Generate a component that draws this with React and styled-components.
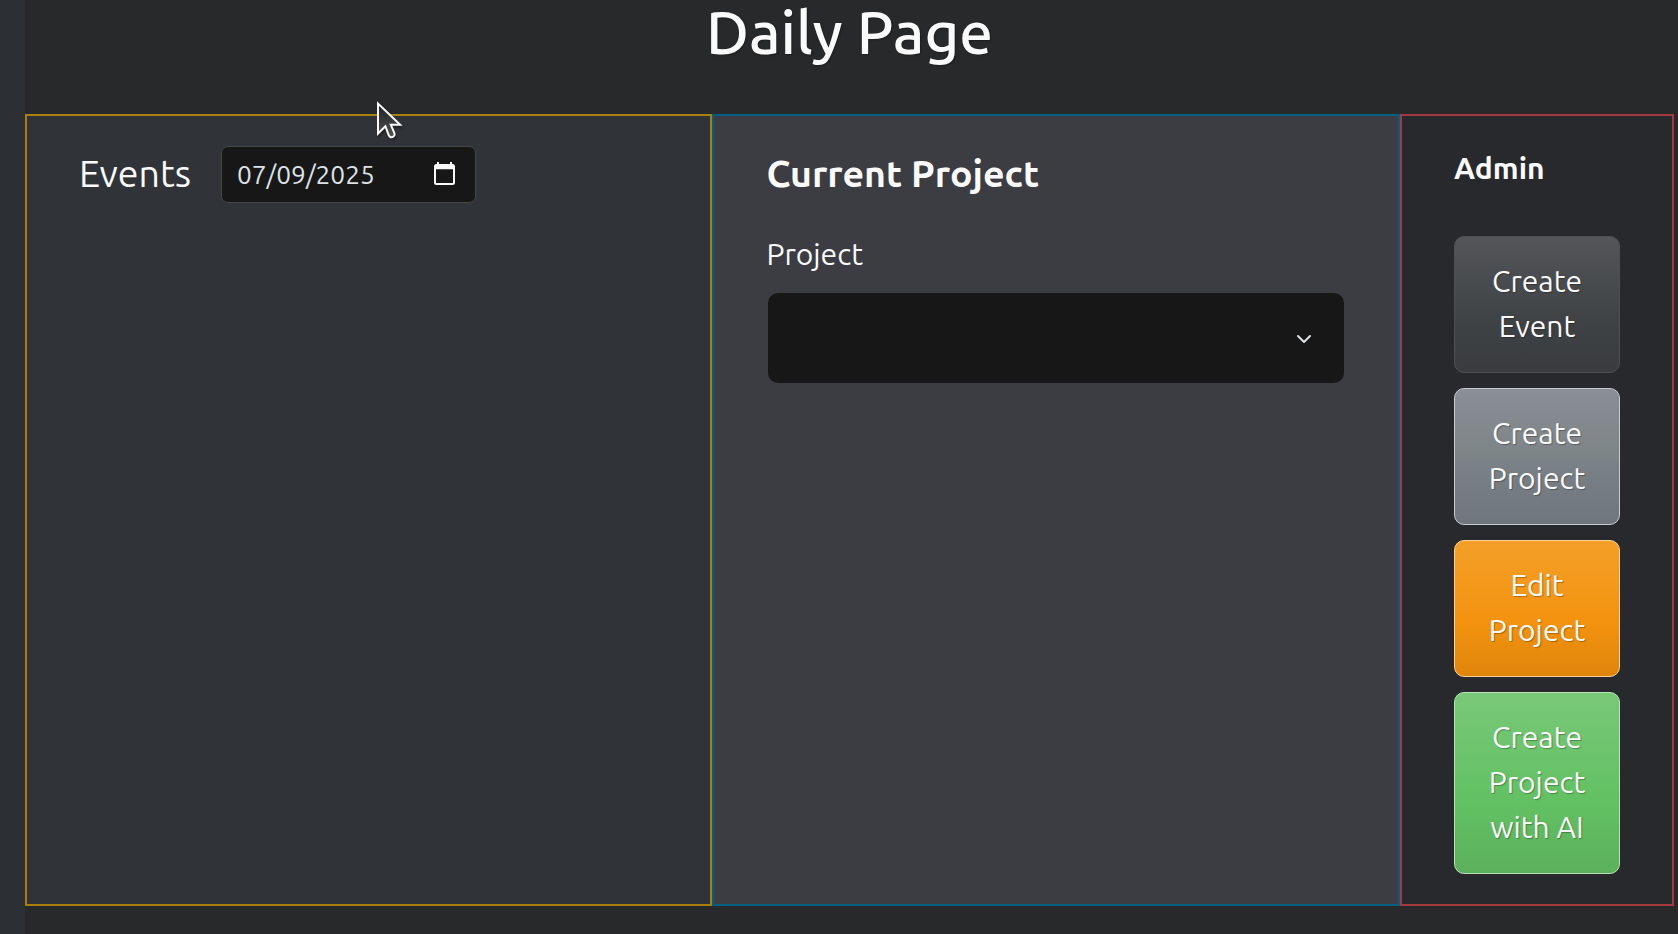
import React from "react";
import styled, { createGlobalStyle } from "styled-components";

const GlobalStyle = createGlobalStyle`
  * { box-sizing: border-box; }
  html, body { margin: 0; height: 100%; overflow: hidden; background: #28292b; }
  body { font-family: Ubuntu, "Noto Sans", "Open Sans", sans-serif; color: #fafafa; }
  h1, h2, h3 { margin: 0; }
`;

const Shell = styled.div`
  display: flex;
  width: 100%;
  height: 100vh;
`;

const Rail = styled.aside`
  width: 25px;
  flex: none;
  background: #2c3035;
`;

const Page = styled.main`
  flex: 1;
  min-width: 0;
  display: flex;
  flex-direction: column;
  background: #28292b;
  padding-right: 4px;
`;

const Title = styled.h1`
  height: 114px;
  font-size: 60px;
  font-weight: 500;
  line-height: 64px;
  text-align: center;
  text-shadow: 1px 1px 2px rgba(0, 0, 0, 0.3);
`;

const Columns = styled.div`
  display: grid;
  grid-template-columns: 687px 688px 274px;
  height: 792px;
`;

const Panel = styled.section`
  border: 2px solid ${(p) => p.$line};
  background: ${(p) => p.$fill};
  padding: 30px ${(p) => p.$inset || 52}px;
`;

const EventsHeader = styled.div`
  display: flex;
  align-items: center;
  height: 57px;
`;

const EventsTitle = styled.h2`
  width: 142px;
  margin-top: -4px;
  font-size: 37.5px;
  font-weight: 400;
  line-height: 56px;
`;

const DateField = styled.div`
  display: flex;
  align-items: center;
  justify-content: space-between;
  width: 255px;
  height: 57px;
  padding: 0 20px 0 15px;
  border: 1px solid #45464a;
  border-radius: 7px;
  background: #171717;
  color: #dee2e6;
  font-size: 26.25px;
  font-weight: 400;
`;

const ProjectTitle = styled.h2`
  font-size: 37.5px;
  font-weight: 700;
  line-height: 54px;
  white-space: nowrap;
`;

const Label = styled.label`
  display: block;
  margin-top: 32px;
  font-size: 30px;
  font-weight: 400;
  line-height: 45px;
`;

const Select = styled.div`
  display: flex;
  align-items: center;
  justify-content: flex-end;
  width: 576px;
  height: 90px;
  margin: 16px 0 0 1.5px;
  padding: 1px 32px 0 0;
  border-radius: 10px;
  background: #171717;
`;

const AdminTitle = styled.h3`
  height: 90px;
  font-size: 30px;
  font-weight: 700;
  line-height: 45px;
`;

const Actions = styled.div`
  display: flex;
  flex-direction: column;
  gap: 15px;
  width: 166px;
`;

const tones = {
  dark: ["#54565a", "#3f4346 60%", "#393b3f", "#4e5054"],
  gray: ["#8a8e96", "#7d8486 50%, #788086 60%", "#6f767c", "#c8cbcd"],
  orange: ["#f49f29", "#f3930f 60%", "#de850b", "#fbd197"],
  green: ["#79c879", "#62c162 60%", "#5cb05c", "#b8e2b8"],
};

const Action = styled.button`
  padding: 21.5px 10px 23.5px;
  border: 1px solid ${(p) => tones[p.$tone][3]};
  border-radius: 10px;
  background: linear-gradient(${(p) => tones[p.$tone].slice(0, 3).join(", ")}) border-box;
  color: #fafafa;
  font-family: inherit;
  font-size: 30px;
  font-weight: 400;
  line-height: 45px;
  text-shadow: 1px 1px 1px rgba(0, 0, 0, 0.3);
`;

const ActionLine = styled.span`
  display: block;
  white-space: nowrap;
`;

const Pointer = styled.svg`
  position: absolute;
  left: 374px;
  top: 98px;
  filter: drop-shadow(1px 2px 1px rgba(0, 0, 0, 0.35));
`;

const actions = [
  ["dark", ["Create", "Event"]],
  ["gray", ["Create", "Project"]],
  ["orange", ["Edit", "Project"]],
  ["green", ["Create", "Project", "with AI"]],
];

const Calendar = styled.svg`
  display: block;
  margin-top: -2px;
`;

const CalendarIcon = () => (
  <Calendar width="22" height="24" viewBox="-0.5 0 22 24">
    <path
      fill="#fafafa"
      fillRule="evenodd"
      d="M3.5 0h2v2h11V0h2v2H19a2.5 2.5 0 0 1 2.5 2.5v16A2.5 2.5 0 0 1 19 23H3a2.5 2.5 0 0 1-2.5-2.5v-16A2.5 2.5 0 0 1 3 2h.5zM2.5 7.3V21h17V7.3z"
    />
  </Calendar>
);

const ChevronIcon = () => (
  <svg width="16" height="10" viewBox="0 0 16 10" fill="none">
    <path d="M2 2l6 6 6-6" stroke="#dee2e6" strokeWidth="2" strokeLinecap="round" strokeLinejoin="round" />
  </svg>
);

export default function App() {
  return (
    <>
      <GlobalStyle />
      <Shell>
        <Rail />
        <Page>
          <Title>Daily Page</Title>
          <Columns>
            <Panel $line="#a97f0e" $fill="#303338">
              <EventsHeader>
                <EventsTitle>Events</EventsTitle>
                <DateField>
                  <span>07/09/2025</span>
                  <CalendarIcon />
                </DateField>
              </EventsHeader>
            </Panel>
            <Panel $line="#035f82" $fill="#3c3d42" $inset={52.5}>
              <ProjectTitle>Current Project</ProjectTitle>
              <Label>Project</Label>
              <Select>
                <ChevronIcon />
              </Select>
            </Panel>
            <Panel $line="#a43a40" $fill="#28292d">
              <AdminTitle>Admin</AdminTitle>
              <Actions>
                {actions.map(([tone, lines]) => (
                  <Action key={lines.join(" ")} $tone={tone}>
                    {lines.map((line) => (
                      <ActionLine key={line}>{line}</ActionLine>
                    ))}
                  </Action>
                ))}
              </Actions>
            </Panel>
          </Columns>
        </Page>
      </Shell>
      <Pointer width="34" height="46" viewBox="0 0 34 46">
        <defs>
          <linearGradient id="pointerFill" x1="0" y1="0" x2="0" y2="1">
            <stop offset="0" stopColor="#202122" />
            <stop offset="1" stopColor="#505152" />
          </linearGradient>
        </defs>
        <path
          d="M4 5.5V35.5L11.4 28.2L14.4 36.4Q15.7 40 18.4 39Q21.5 37.8 20.2 34.6L16.8 26.8H26.2Z"
          fill="url(#pointerFill)"
          stroke="#fafafa"
          strokeWidth="2"
        />
      </Pointer>
    </>
  );
}
